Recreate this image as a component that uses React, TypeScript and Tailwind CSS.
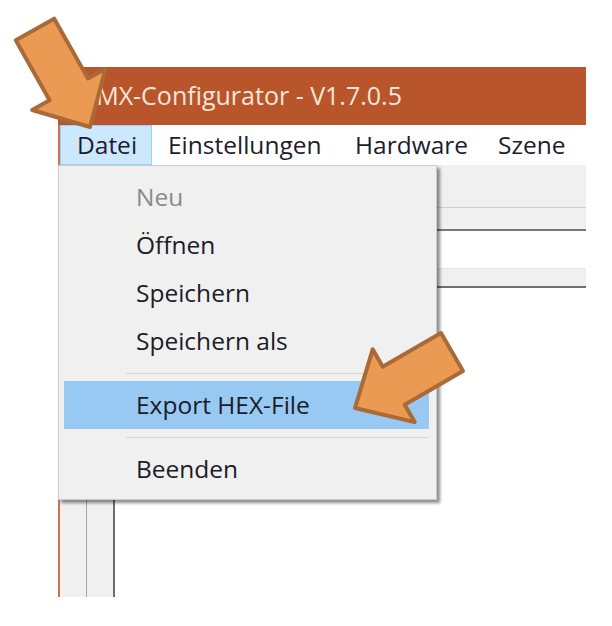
import React from 'react';

const MENU_BAR = [
  { label: 'Datei', w: 'w-[92px]', active: true },
  { label: 'Einstellungen', w: 'w-[187px]', active: false },
  { label: 'Hardware', w: 'w-[143px]', active: false },
  { label: 'Szene', w: 'w-[90px]', active: false },
];

type Entry = { label: string; disabled?: boolean; hot?: boolean } | 'sep';

const FILE_MENU: Entry[] = [
  { label: 'Neu', disabled: true },
  { label: 'Öffnen' },
  { label: 'Speichern' },
  { label: 'Speichern als' },
  'sep',
  { label: 'Export HEX-File', hot: true },
  'sep',
  { label: 'Beenden' },
];

// Hint arrows drawn on top of the window
function Arrows() {
  return (
    <svg className="absolute inset-0 pointer-events-none" width={612} height={626} viewBox="0 0 612 626">
      <polygon
        points="15.8,40.3 54.2,18.7 88,78.6 105.4,68.8 90,127 32.2,110 49.6,100.2"
        fill="#eb9a53"
        stroke="#aa6a38"
        strokeWidth={4}
        strokeLinejoin="round"
      />
      <polygon
        points="441,333 463,371 404.7,404.7 414.7,422.1 355,408 372.7,349.3 382.7,366.7"
        fill="#eb9a53"
        stroke="#aa6a38"
        strokeWidth={4}
        strokeLinejoin="round"
      />
    </svg>
  );
}

function FileMenu() {
  return (
    <div className="absolute left-0 top-[98px] w-[379px] h-[335px] bg-[#f0f0f0] border border-[#cccccc] shadow-[3px_3px_3px_rgba(0,0,0,0.45)] py-[7px]">
      {FILE_MENU.map((e, i) =>
        e === 'sep' ? (
          <div key={i} className="h-[16px] flex items-center pl-[67px] pr-[7px]">
            <div className="h-px w-full bg-[#d7d7d7]" />
          </div>
        ) : (
          <div
            key={i}
            className={
              'h-[48px] flex items-center pl-[72px] ml-[5px] mr-[7px] ' +
              (e.hot ? 'bg-[#97c9f3] ' : '') +
              (e.disabled ? 'text-[#8a8a8a]' : 'text-[#1c1c28]')
            }
          >
            {e.label}
          </div>
        )
      )}
    </div>
  );
}

export default function App() {
  return (
    <div className="relative w-[612px] h-[626px] bg-white overflow-hidden font-['Open_Sans','Noto_Sans',sans-serif] text-[24.5px]">
      <div className="relative ml-[58px] mt-[67px] w-[528px]">
        {/* title bar */}
        <div className="h-[58px] bg-[#b8552a] text-[#f8e6da] text-[25px] flex items-center pl-[20px]">
          DMX-Configurator - V1.7.0.5
        </div>

        <div className="border-l-2 border-[#c7764a]">
          {/* menu bar */}
          <div className="h-[40px] bg-white flex text-[#1c1c2e]">
            {MENU_BAR.map((m) => (
              <div
                key={m.label}
                className={
                  m.w +
                  ' flex items-center pl-[16px] ' +
                  (m.active ? 'bg-[#cce8ff] border border-[#99d1ff] pl-[15px]' : '')
                }
              >
                {m.label}
              </div>
            ))}
          </div>

          {/* toolbars and panels */}
          <div className="h-[42px] bg-[#f0f0f0]" />
          <div className="h-px bg-[#cdcdcd]" />
          <div className="h-[21px] bg-[#f0f0f0]" />
          <div className="h-[2px] bg-[#777777]" />
          <div className="h-[37px] bg-white" />
          <div className="h-px bg-[#e4e4e4]" />
          <div className="h-[17px] bg-[#f0f0f0]" />
          <div className="h-[2px] bg-[#6f6f6f]" />
          <div className="h-[309px] flex">
            <div className="w-[27px] bg-[#f0f0f0] border-r border-[#a5a5a5]" />
            <div className="w-[28px] bg-[#f0f0f0] border-r-2 border-[#6c6c6c]" />
            <div className="flex-1 bg-white" />
          </div>
        </div>

        <FileMenu />
      </div>

      <Arrows />
    </div>
  );
}
